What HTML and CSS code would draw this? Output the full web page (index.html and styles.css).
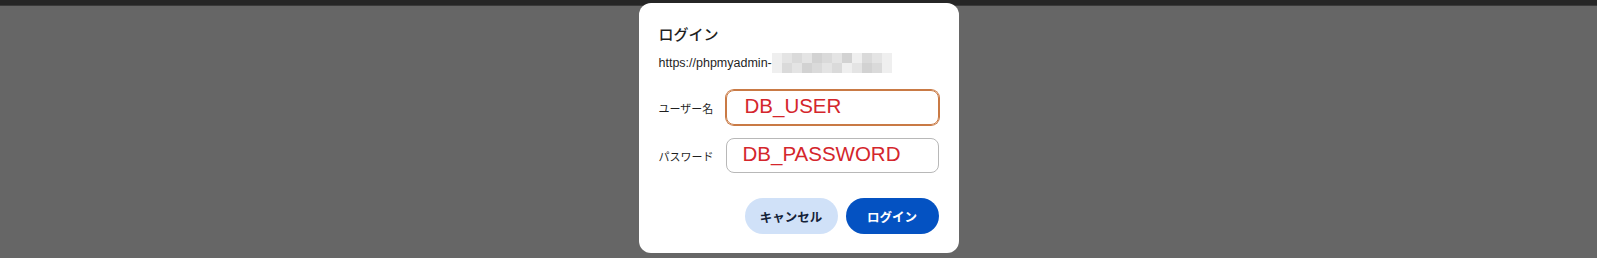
FILE: index.html
```html
<!DOCTYPE html>
<html lang="ja">
<head>
<meta charset="utf-8">
<title>ログイン</title>
<link rel="stylesheet" href="styles.css">
</head>
<body>
<div class="topbar"></div>
<div class="backdrop"></div>
<div class="overlay">
  <div class="dialog">
    <h1 class="title">ログイン</h1>
    <div class="url">
      <span class="url-text">https://phpmyadmin-</span>
      <span class="blur">
        <span class="px a"></span><span class="px b"></span><span class="px c"></span><span class="px b"></span><span class="px d"></span><span class="px c"></span><span class="px b"></span><span class="px d"></span><span class="px a"></span><span class="px c"></span><span class="px b"></span><span class="px a"></span>
        <span class="px a"></span><span class="px c"></span><span class="px b"></span><span class="px d"></span><span class="px c"></span><span class="px b"></span><span class="px c"></span><span class="px a"></span><span class="px b"></span><span class="px d"></span><span class="px c"></span><span class="px a"></span>
      </span>
    </div>
    <div class="form">
      <div class="row">
        <label class="label">ユーザー名</label>
        <div class="field focused">DB_USER</div>
      </div>
      <div class="row">
        <label class="label">パスワード</label>
        <div class="field">DB_PASSWORD</div>
      </div>
    </div>
    <div class="actions">
      <button class="btn cancel">キャンセル</button>
      <button class="btn primary">ログイン</button>
    </div>
  </div>
</div>
</body>
</html>
```

FILE: styles.css
```css
html, body {
  margin: 0;
  padding: 0;
  height: 100%;
}
body {
  background: #666666;
  font-family: "Liberation Sans", "Noto Sans CJK JP", sans-serif;
  color: #1f1f1f;
  overflow: hidden;
}
.topbar {
  height: 5px;
  background: #262626;
  border-bottom: 1px solid #3a3a3a;
}
.backdrop {
  height: calc(100% - 6px);
  background: #666666;
}
.overlay {
  position: absolute;
  top: 3px;
  left: 0;
  right: 0;
  display: flex;
  justify-content: center;
}
.dialog {
  box-sizing: border-box;
  width: 320px;
  height: 250px;
  padding: 21px 20px 19px 20px;
  background: #ffffff;
  border-radius: 12px;
  display: flex;
  flex-direction: column;
}
.title {
  margin: 0;
  font-size: 15px;
  line-height: 20px;
  font-weight: 500;
  font-family: "Noto Sans CJK JP", sans-serif;
  color: #1f1f1f;
}
.url {
  margin-top: 9px;
  height: 20px;
  display: flex;
  align-items: center;
  font-size: 12.5px;
  color: #1f1f1f;
}
.blur {
  display: grid;
  grid-template-columns: repeat(12, 10px);
  grid-template-rows: 10px 10px;
  filter: blur(0.6px);
}
.px.a { background: #efefef; }
.px.b { background: #e4e4e4; }
.px.c { background: #dadada; }
.px.d { background: #d2d2d2; }
.form {
  margin-top: 17px;
  display: flex;
  flex-direction: column;
  gap: 13px;
}
.row {
  display: flex;
  align-items: center;
}
.label {
  width: 67px;
  flex: none;
  font-size: 11px;
  font-family: "Noto Sans CJK JP", sans-serif;
  color: #1f1f1f;
}
.field {
  flex: 1;
  height: 35px;
  box-sizing: border-box;
  border: 1px solid #b8b8b8;
  border-radius: 8px;
  padding: 0 16px 3px 16px;
  display: flex;
  align-items: center;
  font-family: "Liberation Sans", sans-serif;
  font-size: 20.5px;
  line-height: 1;
  color: #d4262c;
}
.field.focused {
  border-color: #c97a45;
  box-shadow: 0 0 0 1px #c97a45;
  padding-left: 18px;
}
.actions {
  margin-top: auto;
  display: flex;
  justify-content: flex-end;
  gap: 8px;
}
.btn {
  width: 93px;
  height: 36px;
  border: none;
  border-radius: 18px;
  font-family: "Noto Sans CJK JP", sans-serif;
  font-size: 12.5px;
  font-weight: 700;
  cursor: pointer;
}
.btn.cancel {
  background: #d0e1f8;
  color: #142238;
}
.btn.primary {
  background: #0452c2;
  color: #ffffff;
}
```
